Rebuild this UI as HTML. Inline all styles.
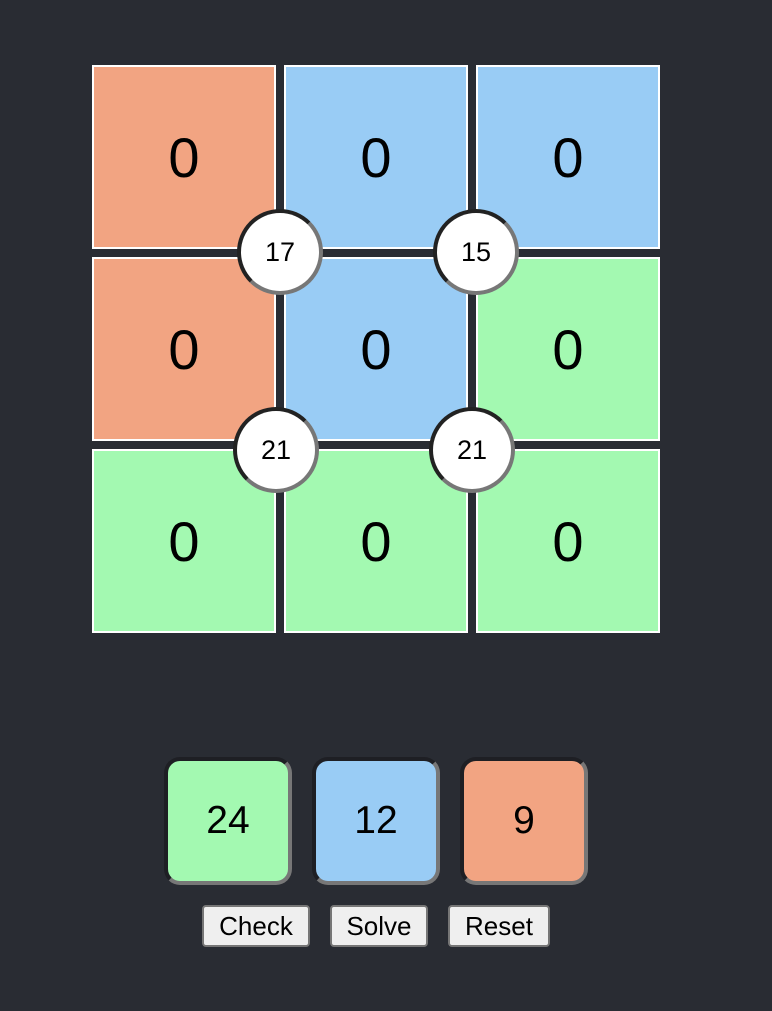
<!DOCTYPE html>
<html><head><style>
html,body{margin:0;padding:0;background:#292c33;width:772px;height:1011px;overflow:hidden;font-family:"Liberation Sans",Arial,sans-serif;}
.cell{position:absolute;width:180px;height:180px;border:2px solid #fff;display:flex;align-items:center;justify-content:center;font-size:56px;color:#000;}
.r{background:#f2a482}.b{background:#99ccf5}.g{background:#a3f9b1}
.c{position:absolute;width:78px;height:78px;border-radius:50%;background:#fff;border:4px solid;border-color:#222 #777 #777 #222;display:flex;align-items:center;justify-content:center;font-size:27px;color:#000;}
.box{position:absolute;top:757px;width:120px;height:120px;border-radius:16px;border:4px solid;border-color:#1e1f24 #777 #777 #1e1f24;display:flex;align-items:center;justify-content:center;font-size:39px;}
.btn{position:absolute;top:905px;height:38px;background:#efefef;border:2px solid #767676;border-radius:4px;display:flex;align-items:center;justify-content:center;font-size:26px;color:#000;box-sizing:content-box;}
</style></head><body>
<div class="cell r" style="left:92px;top:65px">0</div>
<div class="cell b" style="left:284px;top:65px">0</div>
<div class="cell b" style="left:476px;top:65px">0</div>
<div class="cell r" style="left:92px;top:257px">0</div>
<div class="cell b" style="left:284px;top:257px">0</div>
<div class="cell g" style="left:476px;top:257px">0</div>
<div class="cell g" style="left:92px;top:449px">0</div>
<div class="cell g" style="left:284px;top:449px">0</div>
<div class="cell g" style="left:476px;top:449px">0</div>
<div class="c" style="left:237px;top:209px">17</div>
<div class="c" style="left:433px;top:209px">15</div>
<div class="c" style="left:233px;top:407px">21</div>
<div class="c" style="left:429px;top:407px">21</div>
<div class="box g" style="left:164px">24</div>
<div class="box b" style="left:312px">12</div>
<div class="box r" style="left:460px">9</div>
<div class="btn" style="left:202px;width:104px">Check</div>
<div class="btn" style="left:330px;width:94px">Solve</div>
<div class="btn" style="left:448px;width:98px">Reset</div>
</body></html>
